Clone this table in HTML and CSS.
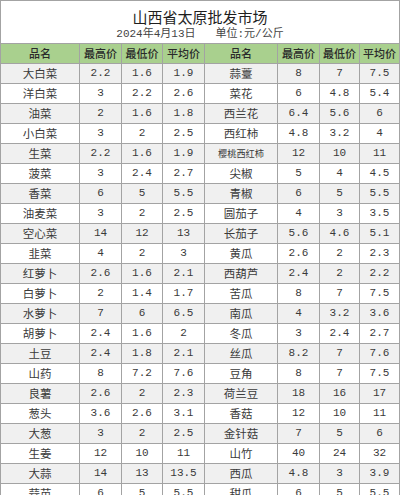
FILE: index.html
```html
<!DOCTYPE html>
<html lang="zh-CN">
<head>
<meta charset="utf-8">
<title>山西省太原批发市场</title>
<link rel="stylesheet" href="styles.css">
</head>
<body>
<div class="sheet">
  <div class="title-block">
    <div class="title">山西省太原批发市场</div>
    <div class="subtitle"><span>2024年4月13日</span><span>单位:元/公斤</span></div>
  </div>
  <table class="prices">
    <colgroup>
      <col class="c-name1"><col class="c-n1"><col class="c-n2"><col class="c-n3">
      <col class="c-name2"><col class="c-n4"><col class="c-n5"><col class="c-n6">
    </colgroup>
    <thead>
      <tr><th>品名</th><th>最高价</th><th>最低价</th><th>平均价</th><th>品名</th><th>最高价</th><th>最低价</th><th>平均价</th></tr>
    </thead>
    <tbody>
      <tr><td class="nm">大白菜</td><td>2.2</td><td>1.6</td><td>1.9</td><td class="nm">蒜薹</td><td>8</td><td>7</td><td>7.5</td></tr>
      <tr><td class="nm">洋白菜</td><td>3</td><td>2.2</td><td>2.6</td><td class="nm">菜花</td><td>6</td><td>4.8</td><td>5.4</td></tr>
      <tr><td class="nm">油菜</td><td>2</td><td>1.6</td><td>1.8</td><td class="nm">西兰花</td><td>6.4</td><td>5.6</td><td>6</td></tr>
      <tr><td class="nm">小白菜</td><td>3</td><td>2</td><td>2.5</td><td class="nm">西红柿</td><td>4.8</td><td>3.2</td><td>4</td></tr>
      <tr><td class="nm">生菜</td><td>2.2</td><td>1.6</td><td>1.9</td><td class="nm shrink">樱桃西红柿</td><td>12</td><td>10</td><td>11</td></tr>
      <tr><td class="nm">菠菜</td><td>3</td><td>2.4</td><td>2.7</td><td class="nm">尖椒</td><td>5</td><td>4</td><td>4.5</td></tr>
      <tr><td class="nm">香菜</td><td>6</td><td>5</td><td>5.5</td><td class="nm">青椒</td><td>6</td><td>5</td><td>5.5</td></tr>
      <tr><td class="nm">油麦菜</td><td>3</td><td>2</td><td>2.5</td><td class="nm">圆茄子</td><td>4</td><td>3</td><td>3.5</td></tr>
      <tr><td class="nm">空心菜</td><td>14</td><td>12</td><td>13</td><td class="nm">长茄子</td><td>5.6</td><td>4.6</td><td>5.1</td></tr>
      <tr><td class="nm">韭菜</td><td>4</td><td>2</td><td>3</td><td class="nm">黄瓜</td><td>2.6</td><td>2</td><td>2.3</td></tr>
      <tr><td class="nm">红萝卜</td><td>2.6</td><td>1.6</td><td>2.1</td><td class="nm">西葫芦</td><td>2.4</td><td>2</td><td>2.2</td></tr>
      <tr><td class="nm">白萝卜</td><td>2</td><td>1.4</td><td>1.7</td><td class="nm">苦瓜</td><td>8</td><td>7</td><td>7.5</td></tr>
      <tr><td class="nm">水萝卜</td><td>7</td><td>6</td><td>6.5</td><td class="nm">南瓜</td><td>4</td><td>3.2</td><td>3.6</td></tr>
      <tr><td class="nm">胡萝卜</td><td>2.4</td><td>1.6</td><td>2</td><td class="nm">冬瓜</td><td>3</td><td>2.4</td><td>2.7</td></tr>
      <tr><td class="nm">土豆</td><td>2.4</td><td>1.8</td><td>2.1</td><td class="nm">丝瓜</td><td>8.2</td><td>7</td><td>7.6</td></tr>
      <tr><td class="nm">山药</td><td>8</td><td>7.2</td><td>7.6</td><td class="nm">豆角</td><td>8</td><td>7</td><td>7.5</td></tr>
      <tr><td class="nm">良薯</td><td>2.6</td><td>2</td><td>2.3</td><td class="nm">荷兰豆</td><td>18</td><td>16</td><td>17</td></tr>
      <tr><td class="nm">葱头</td><td>3.6</td><td>2.6</td><td>3.1</td><td class="nm">香菇</td><td>12</td><td>10</td><td>11</td></tr>
      <tr><td class="nm">大葱</td><td>3</td><td>2</td><td>2.5</td><td class="nm">金针菇</td><td>7</td><td>5</td><td>6</td></tr>
      <tr><td class="nm">生姜</td><td>12</td><td>10</td><td>11</td><td class="nm">山竹</td><td>40</td><td>24</td><td>32</td></tr>
      <tr><td class="nm">大蒜</td><td>14</td><td>13</td><td>13.5</td><td class="nm">西瓜</td><td>4.8</td><td>3</td><td>3.9</td></tr>
      <tr><td class="nm">蒜苗</td><td>6</td><td>5</td><td>5.5</td><td class="nm">甜瓜</td><td>6</td><td>5</td><td>5.5</td></tr>
    </tbody>
  </table>
</div>
</body>
</html>
```
FILE: styles.css
```css
html, body {
  margin: 0;
  padding: 0;
  background: #ffffff;
}

body {
  font-family: "Liberation Mono", "Noto Sans CJK SC", monospace;
  color: #3a3a3a;
  overflow: hidden;
}

.sheet {
  width: 400px;
}

.title-block {
  box-sizing: border-box;
  width: 400px;
  height: 43px;
  border: 1px solid #a3a3a3;
  border-bottom: none;
  display: flex;
  flex-direction: column;
  align-items: center;
}

.title {
  font-size: 15px;
  line-height: 19px;
  margin-top: 6px;
  color: #1e1e1e;
  font-family: "Noto Sans CJK SC", sans-serif;
}

.subtitle {
  display: flex;
  gap: 20px;
  font-size: 11px;
  line-height: 14px;
  margin-top: 1px;
  color: #444;
}

.prices {
  width: 400px;
  table-layout: fixed;
  border-collapse: separate;
  border-spacing: 1px;
  background: #a3a3a3;
}

.c-name1 { width: 78px; }
.c-n1 { width: 41px; }
.c-n2 { width: 40px; }
.c-n3 { width: 41px; }
.c-name2 { width: 72px; }
.c-n4 { width: 41px; }
.c-n5 { width: 39px; }
.c-n6 { width: 39px; }

.prices th,
.prices td {
  padding: 0;
  height: 19px;
  line-height: 19px;
  text-align: center;
  white-space: nowrap;
  overflow: hidden;
}

.prices th {
  background: #a9d08e;
  font-family: "Noto Sans CJK SC", sans-serif;
  font-size: 11px;
  font-weight: 500;
  color: #2a2a2a;
}

.prices td {
  background: #ffffff;
  font-size: 11px;
}

.prices tbody tr:nth-child(odd) td {
  background: #f0f0f0;
}

.prices td.nm {
  font-family: "Noto Sans CJK SC", sans-serif;
  font-size: 11.5px;
}

.prices td.shrink {
  font-size: 9.2px;
}
```
